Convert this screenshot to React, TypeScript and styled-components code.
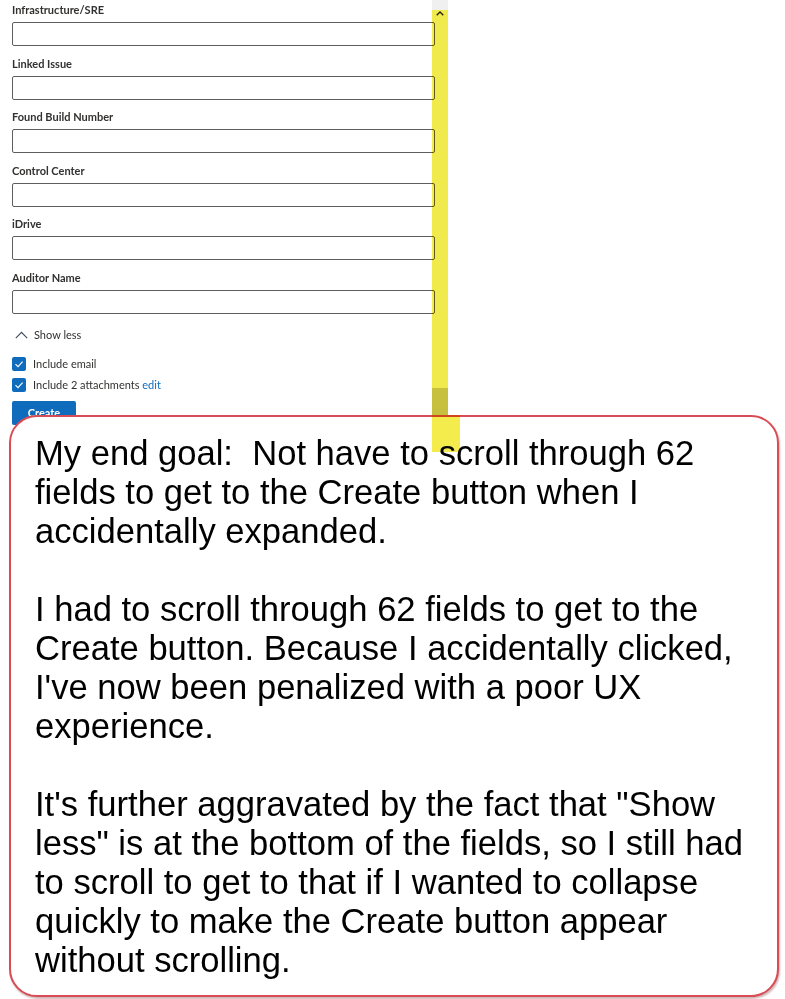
import styled, { createGlobalStyle } from "styled-components";

const GlobalStyle = createGlobalStyle`
  html, body {
    margin: 0;
    padding: 0;
    background: #ffffff;
  }
  body {
    font-family: Lato, "Open Sans", sans-serif;
  }
`;

const Page = styled.div`
  position: relative;
  width: 785px;
  height: 999px;
  overflow: hidden;
  background: #ffffff;
`;

const Pane = styled.div`
  display: flex;
  flex-direction: row;
  width: 448px;
`;

const FormColumn = styled.div`
  position: relative;
  z-index: 1;
  width: 420px;
  padding-left: 12px;
`;

const Field = styled.div`
  margin-bottom: 7.5px;
`;

const Label = styled.label`
  display: block;
  height: 22px;
  padding-top: 2px;
  box-sizing: border-box;
  font-size: 11px;
  line-height: 16px;
  font-weight: 700;
  color: #323130;
`;

const TextInput = styled.input`
  display: block;
  width: 423px;
  height: 24px;
  box-sizing: border-box;
  border: 1px solid #605e5c;
  border-radius: 2px;
  background: #ffffff;
  outline: none;
`;

const ToggleRow = styled.div`
  display: flex;
  align-items: center;
  gap: 6px;
  height: 20px;
  margin-top: 11px;
  padding-left: 3px;
  font-size: 11px;
  color: #323130;
`;

const CheckRow = styled.div<{ $gap: number }>`
  display: flex;
  align-items: center;
  gap: 7px;
  height: 14px;
  margin-top: ${(p) => p.$gap}px;
  font-size: 11px;
  color: #323130;
`;

const Box = styled.span`
  display: inline-flex;
  align-items: center;
  justify-content: center;
  width: 14px;
  height: 14px;
  border-radius: 2px;
  background: #0f6cbd;
`;

const Link = styled.span`
  color: #0f6cbd;
`;

const CreateButton = styled.button`
  display: block;
  margin-top: 9px;
  width: 64px;
  height: 24px;
  padding: 0;
  border: none;
  border-radius: 2px;
  background: #0f6cbd;
  color: #ffffff;
  font-family: Lato, "Open Sans", sans-serif;
  font-size: 11px;
  font-weight: 700;
`;

const Scrollbar = styled.div`
  width: 16px;
  background: linear-gradient(#f0f0f0 0 10px, #fdfdfd 10px);
  display: flex;
  justify-content: center;
  padding-top: 11px;
  box-sizing: border-box;
`;

const Thumb = styled.div`
  position: absolute;
  left: 432px;
  top: 388px;
  width: 16px;
  height: 27px;
  background: #d0d0d0;
`;

const Callout = styled.div`
  position: relative;
  z-index: 2;
  margin: -10px 0 0 9px;
  width: 770px;
  height: 582px;
  box-sizing: border-box;
  border: 2px solid #d94b55;
  border-radius: 28px;
  background: #ffffff;
  box-shadow: 1px 2px 2px rgba(120, 40, 40, 0.35);
  padding: 17px 10px 0 24px;
  font-family: "Liberation Sans", Arial, sans-serif;
  font-size: 34.6px;
  line-height: 39px;
  color: #000000;
`;

const Paragraph = styled.p`
  margin: 0 0 39px 0;
`;

const Line = styled.span`
  display: block;
  white-space: pre;
`;

const Highlight = styled.div<{ $top: number; $width: number; $height: number }>`
  position: absolute;
  z-index: 3;
  left: 432px;
  top: ${(p) => p.$top}px;
  width: ${(p) => p.$width}px;
  height: ${(p) => p.$height}px;
  background: #f3ec4c;
  mix-blend-mode: multiply;
  pointer-events: none;
`;

const fields = [
  "Infrastructure/SRE",
  "Linked Issue",
  "Found Build Number",
  "Control Center",
  "iDrive",
  "Auditor Name",
];

const paragraphs = [
  [
    "My end goal:  Not have to scroll through 62",
    "fields to get to the Create button when I",
    "accidentally expanded.",
  ],
  [
    "I had to scroll through 62 fields to get to the",
    "Create button. Because I accidentally clicked,",
    "I've now been penalized with a poor UX",
    "experience.",
  ],
  [
    "It's further aggravated by the fact that \"Show",
    "less\" is at the bottom of the fields, so I still had",
    "to scroll to get to that if I wanted to collapse",
    "quickly to make the Create button appear",
    "without scrolling.",
  ],
];

function Check() {
  return (
    <svg width="10" height="10" viewBox="0 0 10 10">
      <path d="M1.5 5.2 L4 7.6 L8.6 2.6" fill="none" stroke="#fff" strokeWidth="1.1" />
    </svg>
  );
}

export default function App() {
  return (
    <Page>
      <GlobalStyle />
      <Pane>
        <FormColumn>
          {fields.map((name) => (
            <Field key={name}>
              <Label>{name}</Label>
              <TextInput />
            </Field>
          ))}
          <ToggleRow>
            <svg width="13" height="8" viewBox="0 0 13 8">
              <path d="M0.8 7.2 L6.5 1.3 L12.2 7.2" fill="none" stroke="#3b4a5c" strokeWidth="1.1" />
            </svg>
            Show less
          </ToggleRow>
          <CheckRow $gap={12}>
            <Box><Check /></Box>
            Include email
          </CheckRow>
          <CheckRow $gap={7}>
            <Box><Check /></Box>
            <span>Include 2 attachments <Link>edit</Link></span>
          </CheckRow>
          <CreateButton>Create</CreateButton>
        </FormColumn>
        <Scrollbar>
          <svg width="8" height="5" viewBox="0 0 8 5">
            <path d="M0.7 4.3 L4 1 L7.3 4.3" fill="none" stroke="#2b2b2b" strokeWidth="1.4" />
          </svg>
        </Scrollbar>
      </Pane>
      <Thumb />
      <Callout>
        {paragraphs.map((lines, i) => (
          <Paragraph key={i}>
            {lines.map((l) => (
              <Line key={l}>{l}</Line>
            ))}
          </Paragraph>
        ))}
      </Callout>
      <Highlight $top={10} $width={16} $height={405} />
      <Highlight $top={415} $width={28} $height={37} />
    </Page>
  );
}
